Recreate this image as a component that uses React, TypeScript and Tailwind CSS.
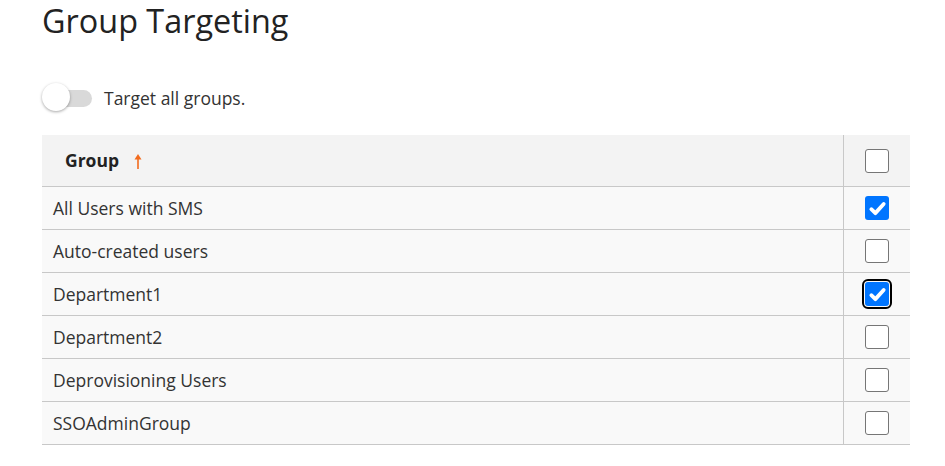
const groups = [
  { name: "All Users with SMS", checked: true },
  { name: "Auto-created users", checked: false },
  { name: "Department1", checked: true, focused: true },
  { name: "Department2", checked: false },
  { name: "Deprovisioning Users", checked: false },
  { name: "SSOAdminGroup", checked: false },
];

function Box({ checked, focused }: { checked?: boolean; focused?: boolean }) {
  if (checked) {
    return (
      <span
        className={
          "flex h-[24px] w-[24px] items-center justify-center rounded-[3px] bg-[#0075ff] " +
          (focused ? "outline-2 outline-offset-1 outline-black" : "")
        }
      >
        <svg viewBox="0 0 16 16" className="h-[19px] w-[19px]">
          <path d="M2.8 8.6 L6.2 11.9 L13.2 4.2" fill="none" stroke="white" strokeWidth="3.2" strokeLinecap="round" strokeLinejoin="round" />
        </svg>
      </span>
    );
  }
  return <span className="block h-[24px] w-[24px] rounded-[3px] border border-[#767676] bg-white" />;
}

export default function App() {
  return (
    <div className="min-h-screen bg-white px-[42px] pt-[4px] text-[#333] [font-family:'Open_Sans',sans-serif]">
      <h1 className="text-[32.4px] leading-[32px] text-[#222]">Group Targeting</h1>

      <div className="mt-[48px] flex items-center gap-[12px]">
        <span className="relative flex h-[28px] w-[50px] items-center">
          <span className="ml-[3px] h-[17px] w-[47px] rounded-full bg-[#d9d9d9]" />
          <span className="absolute left-0 top-[-1px] h-[28px] w-[28px] rounded-full bg-white shadow-[0_1px_3px_rgba(0,0,0,0.35)]" />
        </span>
        <span className="text-[17.5px] text-[#333]">Target all groups.</span>
      </div>

      <div className="mt-[23px] w-[868px]">
        <div className="flex h-[52px] border-b border-[#c8c8c8] bg-[#f3f3f3]">
          <div className="flex flex-1 items-center pl-[23px] text-[17.5px] font-bold text-[#222]">
            Group
            <svg viewBox="0 0 10 16" className="ml-[14px] h-[16px] w-[10px]">
              <path d="M5 16 V5" fill="none" stroke="#f26b1d" strokeWidth="1.6" />
              <path d="M1.5 6.5 L5 1 L8.5 6.5 Z" fill="#f26b1d" />
            </svg>
          </div>
          <div className="flex w-[67px] items-center justify-center border-l border-[#c8c8c8]">
            <Box />
          </div>
        </div>
        {groups.map((g) => (
          <div key={g.name} className="flex h-[43px] border-b border-[#c8c8c8] bg-[#f9f9f9]">
            <div className="flex flex-1 items-center pl-[11px] text-[17.5px] text-[#333]">{g.name}</div>
            <div className="flex w-[67px] items-center justify-center border-l border-[#c8c8c8]">
              <Box checked={g.checked} focused={g.focused} />
            </div>
          </div>
        ))}
      </div>
    </div>
  );
}
